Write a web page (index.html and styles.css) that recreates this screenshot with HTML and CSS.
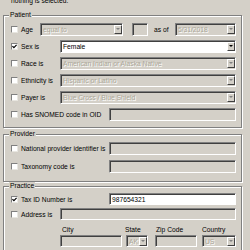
FILE: index.html
```html
<!DOCTYPE html>
<html>
<head>
    <title>Patient Filter</title>
    <link rel="stylesheet" href="styles.css">
</head>
<body>
    <div class="note">nothing is selected.</div>

    <fieldset class="group patient">
        <legend>Patient</legend>
        <div class="rows">
            <div class="row">
                <label class="check w-age"><span class="box"></span>Age</label>
                <div class="combo off age-op"><span>equal to</span><i class="drop"></i></div>
                <div class="field off age-num"></div>
                <span class="asof">as of</span>
                <div class="combo off age-date"><span>5/31/2018</span><i class="drop"></i></div>
            </div>
            <div class="row">
                <label class="check w-mid"><span class="box"><svg class="tick" viewBox="0 0 5 5"><path d="M0.4 2.1L1.9 3.7L4.6 0.8"/></svg></span>Sex is</label>
                <div class="combo wide"><span>Female</span><i class="drop"></i></div>
            </div>
            <div class="row">
                <label class="check w-mid"><span class="box"></span>Race is</label>
                <div class="combo off wide"><span>American Indian or Alaska Native</span><i class="drop"></i></div>
            </div>
            <div class="row">
                <label class="check w-mid"><span class="box"></span>Ethnicity is</label>
                <div class="combo off wide"><span>Hispanic or Latino</span><i class="drop"></i></div>
            </div>
            <div class="row">
                <label class="check w-mid"><span class="box"></span>Payer is</label>
                <div class="combo off wide"><span>Blue Cross / Blue Shield</span><i class="drop"></i></div>
            </div>
            <div class="row">
                <label class="check w-long"><span class="box"></span>Has SNOMED code in OID</label>
                <div class="field off wide"></div>
            </div>
        </div>
    </fieldset>

    <fieldset class="group provider">
        <legend>Provider</legend>
        <div class="rows">
            <div class="row">
                <label class="check w-long"><span class="box"></span>National provider identifier is</label>
                <div class="field off wide"></div>
            </div>
            <div class="row">
                <label class="check w-long"><span class="box"></span>Taxonomy code is</label>
                <div class="field off wide"></div>
            </div>
        </div>
    </fieldset>

    <fieldset class="group practice">
        <legend>Practice</legend>
        <div class="rows">
            <div class="row">
                <label class="check w-long"><span class="box"><svg class="tick" viewBox="0 0 5 5"><path d="M0.4 2.1L1.9 3.7L4.6 0.8"/></svg></span>Tax ID Number is</label>
                <div class="field wide"><span>987654321</span></div>
            </div>
            <div class="row">
                <label class="check w-mid"><span class="box"></span>Address is</label>
                <div class="field off wide"></div>
            </div>
            <div class="address">
                <div class="part city">
                    <span class="cap">City</span>
                    <div class="field off"></div>
                </div>
                <div class="part state">
                    <span class="cap">State</span>
                    <div class="combo off"><span>AK</span><i class="drop"></i></div>
                </div>
                <div class="part zip">
                    <span class="cap">Zip Code</span>
                    <div class="field off"></div>
                </div>
                <div class="part country">
                    <span class="cap">Country</span>
                    <div class="combo off"><span>US</span><i class="drop"></i></div>
                </div>
            </div>
        </div>
    </fieldset>
</body>
</html>
```

FILE: styles.css
```css
body {
    margin: 0;
    background-color: #d4d0c8;
    font-family: "Liberation Sans", Arial, sans-serif;
    font-size: 6.7px;
    color: #000;
    overflow: hidden;
}
.note {
    margin: -3px 0 0 11px;
    height: 14px;
    line-height: 8px;
}
.group {
    margin: 0 8px 0 3px;
    padding: 4px 5px 6px 7px;
    border: 1px solid #808080;
    box-shadow: 1px 1px 0 #fff, inset 1px 1px 0 #fff;
    min-width: 0;
}
.provider {
    margin-top: 2px;
    padding-bottom: 8px;
}
.practice {
    padding-top: 3px;
}
legend {
    padding: 0 1px;
    margin-left: -2px;
    line-height: 8px;
    background-color: #d4d0c8;
}
.rows {
    display: flex;
    flex-direction: column;
    gap: 4px;
}
.provider .rows {
    gap: 5px;
}
.practice .rows {
    gap: 3px;
}
.row {
    display: flex;
    align-items: center;
    height: 13px;
}
.practice .row {
    height: 12px;
}
.check {
    display: flex;
    align-items: center;
    flex: none;
    white-space: nowrap;
}
.w-age {
    width: 29px;
}
.w-mid {
    width: 49px;
}
.w-long {
    width: 98px;
}
.box {
    display: flex;
    align-items: center;
    justify-content: center;
    width: 7px;
    height: 7px;
    margin-right: 3px;
    box-sizing: border-box;
    background-color: #fff;
    border: 1px solid;
    border-color: #808080 #e8e6e0 #e8e6e0 #808080;
}
.tick {
    width: 5px;
    height: 5px;
}
.tick path {
    fill: none;
    stroke: #000;
    stroke-width: 1.2;
}
.combo,
.field {
    display: flex;
    align-items: center;
    height: 13px;
    box-sizing: border-box;
    padding-left: 2px;
    background-color: #fff;
    border: 1px solid;
    border-color: #808080 #fff #fff #808080;
    box-shadow: inset 1px 1px 0 #404040;
    white-space: nowrap;
    overflow: hidden;
}
.practice .field,
.practice .combo {
    height: 12px;
}
.off {
    background-color: #d4d0c8;
    color: #aca899;
}
.off span {
    text-shadow: 1px 1px 0 #fff;
}
.wide {
    flex: 1;
}
.drop {
    position: relative;
    flex: none;
    width: 8px;
    height: 9px;
    margin-left: auto;
    box-sizing: border-box;
    background-color: #d4d0c8;
    border: 1px solid;
    border-color: #fff #404040 #404040 #fff;
}
.drop::after {
    content: "";
    position: absolute;
    left: 1px;
    top: 2px;
    border-left: 2px solid transparent;
    border-right: 2px solid transparent;
    border-top: 2px solid #000;
}
.off .drop::after {
    border-top-color: #808080;
}
.age-op {
    width: 83px;
    flex: none;
}
.age-num {
    width: 16px;
    margin-left: 9px;
    flex: none;
}
.asof {
    margin-left: 6px;
    width: 15px;
}
.age-date {
    margin-left: 6px;
    flex: 1;
}
.address {
    display: flex;
    margin: 3px 0 0 49px;
}
.part {
    display: flex;
    flex-direction: column;
    gap: 1px;
}
.cap {
    line-height: 8px;
    padding-left: 2px;
}
.city {
    width: 62px;
}
.state {
    width: 22px;
    margin-left: 4px;
}
.state .cap {
    padding-left: 0;
    margin-left: -1px;
}
.zip {
    width: 42px;
    margin-left: 7px;
}
.zip .cap {
    padding-left: 1px;
}
.country {
    flex: 1;
    margin-left: 5px;
}
.country .cap {
    padding-left: 0;
}
```
